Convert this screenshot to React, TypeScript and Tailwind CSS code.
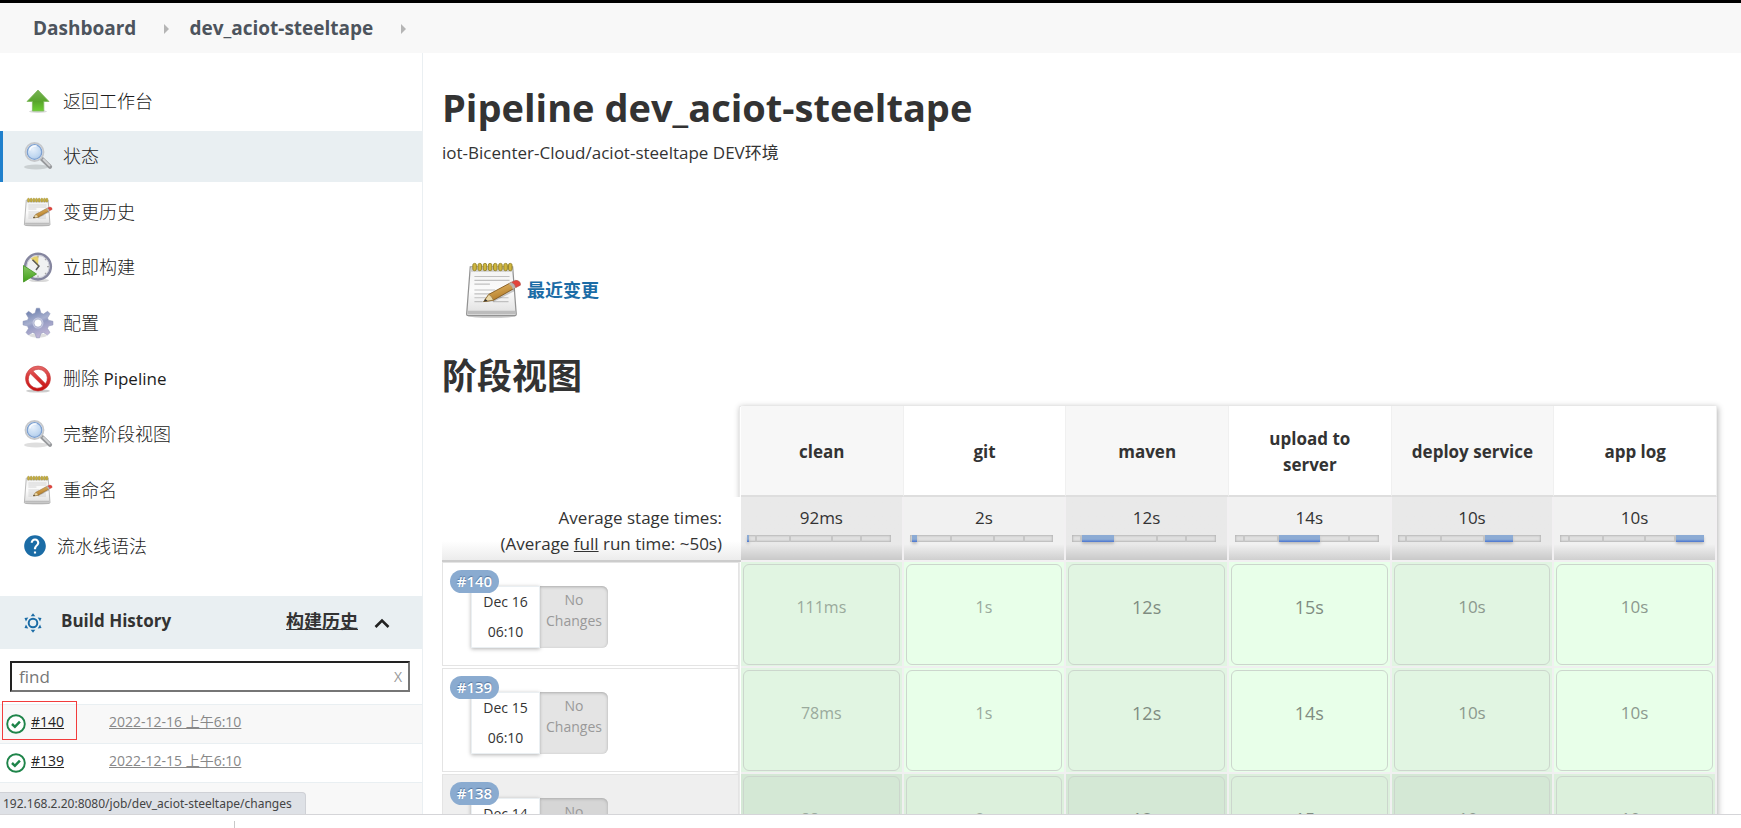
import React from "react";

type IconProps = { className?: string };

function UpIcon() {
  return (
    <svg viewBox="0 0 32 32" className="h-8 w-8" aria-hidden="true">
      <defs>
        <linearGradient id="upFill" x1="0" y1="0" x2="0" y2="1">
          <stop offset="0" stopColor="#79b356" />
          <stop offset="0.55" stopColor="#58a52b" />
          <stop offset="1" stopColor="#6dd032" />
        </linearGradient>
      </defs>
      <ellipse cx="16" cy="26.5" rx="9" ry="1.5" fill="#000" opacity="0.15" />
      <path d="M16 5 L27 16.5 H21.8 V26 H10.4 V16.5 H5 Z" fill="url(#upFill)" stroke="#7fb95e" strokeWidth="0.8" strokeLinejoin="round" />
    </svg>
  );
}

function SearchIcon() {
  return (
    <svg viewBox="0 0 32 32" className="h-8 w-8" aria-hidden="true">
      <defs>
        <radialGradient id="lens" cx="0.4" cy="0.3" r="0.8">
          <stop offset="0" stopColor="#e6f0fb" />
          <stop offset="0.6" stopColor="#c4daf2" />
          <stop offset="1" stopColor="#a8c4e4" />
        </radialGradient>
      </defs>
      <ellipse cx="14" cy="27" rx="12" ry="2.4" fill="#000" opacity="0.13" />
      <path d="M19.5 18.5 L28 26.8" stroke="#96989b" strokeWidth="4.2" strokeLinecap="round" />
      <path d="M21.5 19.5 L27.6 25.6" stroke="#d2d3d5" strokeWidth="1.8" strokeLinecap="round" />
      <circle cx="12.5" cy="12" r="9" fill="#fff" stroke="#c6c8cb" strokeWidth="1.8" />
      <circle cx="12.5" cy="12" r="7.3" fill="url(#lens)" stroke="#7b9fd0" strokeWidth="1.3" />
      <path d="M7.6 10.5a5.6 5.6 0 0 1 7-4.4" stroke="#fff" strokeWidth="1.6" fill="none" opacity="0.8" />
    </svg>
  );
}

function NotepadIcon({ className = "h-[30px] w-8" }: IconProps) {
  return (
    <svg viewBox="0 0 60 60" preserveAspectRatio="none" className={className} aria-hidden="true">
      <defs>
        <linearGradient id="paper" x1="0" y1="0" x2="0" y2="1">
          <stop offset="0" stopColor="#f2f2f2" />
          <stop offset="0.5" stopColor="#fbfbfb" />
          <stop offset="1" stopColor="#dedede" />
        </linearGradient>
        <linearGradient id="pencil" x1="0" y1="0" x2="0.5" y2="1">
          <stop offset="0" stopColor="#f0c878" />
          <stop offset="1" stopColor="#ad7420" />
        </linearGradient>
      </defs>
      <ellipse cx="29" cy="57" rx="23" ry="2" fill="#000" opacity="0.18" />
      <path d="M8 6 H49 L52.5 55 Q52.5 56.5 51 56.5 H6 Q4.5 56.5 4.5 55 Z" fill="url(#paper)" stroke="#929292" strokeWidth="1.2" />
      <path d="M8.5 6.5 H48.5 L49 11 H8 Z" fill="#cdcdcd" />
      <path d="M5.8 51.5 H51.3 V55 H5.8 Z" fill="#bcbcbc" />
      <g fill="#d0b63e" stroke="#948225" strokeWidth="0.9">
        <rect x="10.5" y="2.5" width="3.4" height="7.5" rx="1.6" />
        <rect x="15.5" y="2.5" width="3.4" height="7.5" rx="1.6" />
        <rect x="20.5" y="2.5" width="3.4" height="7.5" rx="1.6" />
        <rect x="25.5" y="2.5" width="3.4" height="7.5" rx="1.6" />
        <rect x="30.5" y="2.5" width="3.4" height="7.5" rx="1.6" />
        <rect x="35.5" y="2.5" width="3.4" height="7.5" rx="1.6" />
        <rect x="40.5" y="2.5" width="3.4" height="7.5" rx="1.6" />
        <rect x="45" y="2.5" width="3.4" height="7.5" rx="1.6" />
      </g>
      <path d="M12 16H46M12 20H46M12 24H27M12 30H32M12 34H30M12 38H24M12 42H20M36 38H45M30 42H45" stroke="#c0c0c0" strokeWidth="1.2" />
      <path d="M22 42 L31 42 L51 31 L50 27 Z" fill="#000" opacity="0.2" />
      <path d="M21 42 L26 34.5 L47 22.5 Q51 24 51 28 L30.5 40.5 Z" fill="url(#pencil)" stroke="#825a22" strokeWidth="0.9" strokeLinejoin="round" />
      <path d="M21 42 L26 34.5 Q29 36.5 30.5 40.5 Z" fill="#ecd9a8" stroke="#8a6a35" strokeWidth="0.7" />
      <path d="M21 42 L22.7 39.4 L24.8 41.4 Z" fill="#333" />
      <path d="M45 23.7 L48.5 21.6 Q53 23.5 52.5 27.2 L49 29.3 Q49 25.5 45 23.7Z" fill="#b9b3b0" />
      <path d="M48 21.9 L52 20 Q57 20.5 56.5 25 L52 27.5 Q52 24 48 21.9Z" fill="#e5433b" stroke="#b34a43" strokeWidth="0.7" />
    </svg>
  );
}

function ClockIcon() {
  return (
    <svg viewBox="0 0 32 32" className="h-8 w-8" aria-hidden="true">
      <defs>
        <linearGradient id="play" x1="0" y1="0" x2="0" y2="1">
          <stop offset="0" stopColor="#8ac667" />
          <stop offset="1" stopColor="#3fa117" />
        </linearGradient>
      </defs>
      <ellipse cx="17" cy="29.5" rx="10" ry="1.6" fill="#000" opacity="0.15" />
      <circle cx="16" cy="15.6" r="12.8" fill="#f0f1f2" stroke="#85869f" strokeWidth="2.6" />
      <circle cx="16" cy="15.6" r="11.2" fill="none" stroke="#c3c4d2" strokeWidth="0.8" />
      <path d="M16 15.6 L8.8 7.6 Q12 4.8 16.5 5 Z" fill="#e7d26b" />
      <path d="M10.5 8.8 L17 15 L14 19" stroke="#5a5a5a" strokeWidth="1.5" fill="none" />
      <path d="M16 4.5v2M27 15.6h-2M24 8l-1 1M24 23l-1-1M16 26.5v-2" stroke="#a8a8a8" strokeWidth="1.2" />
      <path d="M1.5 14.5 L14.5 23 L1.5 31 Z" fill="url(#play)" stroke="#4d9a2d" strokeWidth="0.9" strokeLinejoin="round" />
    </svg>
  );
}

function GearIcon() {
  return (
    <svg viewBox="0 0 32 32" className="h-8 w-8" aria-hidden="true">
      <defs>
        <linearGradient id="gear" x1="0.2" y1="0" x2="0.6" y2="1">
          <stop offset="0" stopColor="#6478a8" />
          <stop offset="0.45" stopColor="#a8b0cf" />
          <stop offset="0.55" stopColor="#949bc2" />
          <stop offset="1" stopColor="#c4b8d8" />
        </linearGradient>
      </defs>
      <ellipse cx="16" cy="28.5" rx="9" ry="2" fill="#000" opacity="0.13" />
      <path
        fill="url(#gear)"
        fillRule="evenodd"
        d="M14.4 1.2h3.2l1.4 4.9 2.5 1 4.1-2.9 2.5 2.5-2.6 4.3 1 2.2 4.5 1.1v3.6l-4.5 1.2-1 2.4 2.5 4.1-2.5 2.4-4.1-2.5-2.5.9-1.4 4.5h-3.1l-1.4-4.5-2.4-.9-4.2 2.5-2.4-2.4 2.5-4.1-1-2.4L1 17.9v-3.6l4.5-1.1 1-2.2-2.5-4.3 2.5-2.5 4.1 2.9 2.4-1zM16 12.100a4 4 0 1 0 0 8 4 4 0 0 0 0-8z"
        stroke="#8d95b6"
        strokeWidth="0.5"
      />
      <circle cx="16" cy="16.1" r="4.9" fill="none" stroke="#c5c9e0" strokeWidth="1.2" />
    </svg>
  );
}

function ForbiddenIcon() {
  return (
    <svg viewBox="0 0 32 32" className="h-8 w-8" aria-hidden="true">
      <defs>
        <linearGradient id="stop" x1="0" y1="0" x2="0" y2="1">
          <stop offset="0" stopColor="#e56a6a" />
          <stop offset="0.5" stopColor="#d83333" />
          <stop offset="1" stopColor="#c40d0d" />
        </linearGradient>
      </defs>
      <ellipse cx="16" cy="28" rx="12" ry="1.6" fill="#000" opacity="0.2" />
      <circle cx="16" cy="15.5" r="10" fill="#fff" />
      <path
        fillRule="evenodd"
        fill="url(#stop)"
        stroke="#c43a3a"
        strokeWidth="0.6"
        d="M16 3a12.5 12.5 0 1 0 0 25 12.5 12.5 0 0 0 0-25zM10.9 8.1L23.5 20.7A9 9 0 0 0 10.9 8.1zM8.3 10.6A9 9 0 0 0 21 23.2z"
      />
    </svg>
  );
}

function HelpIcon() {
  return (
    <svg viewBox="0 0 24 24" className="h-[26px] w-[26px]" aria-hidden="true">
      <path
        fill="#1b6ca6"
        d="M12 2C6.48 2 2 6.48 2 12s4.48 10 10 10 10-4.48 10-10S17.52 2 12 2zm1 17h-2v-2h2v2zm2.07-7.75l-.9.92C13.45 12.9 13 13.5 13 15h-2v-.5c0-1.1.45-2.1 1.17-2.83l1.24-1.26c.37-.36.59-.86.59-1.41 0-1.1-.9-2-2-2s-2 .9-2 2H8c0-2.21 1.79-4 4-4s4 1.79 4 4c0 .88-.36 1.68-.93 2.25z"
      />
    </svg>
  );
}

function SunIcon() {
  return (
    <svg viewBox="0 0 20 20" className="h-5 w-5" aria-hidden="true">
      <circle cx="10" cy="10" r="4.3" fill="none" stroke="#1b6ca6" strokeWidth="2" />
      <g fill="#1b6ca6">
        {[0, 60, 120, 180, 240, 300].map((a) => (
          <path key={a} d="M10 0.2L12.3 3.2H7.7Z" transform={`rotate(${a} 10 10)`} />
        ))}
      </g>
    </svg>
  );
}

function SuccessIcon() {
  return (
    <svg viewBox="0 0 20 20" className="h-5 w-5 shrink-0" aria-hidden="true">
      <circle cx="10" cy="10" r="8.8" fill="#fff" stroke="#1e8449" strokeWidth="1.9" />
      <path d="M6 10l2.9 2.8 5-5.2" fill="none" stroke="#1e8449" strokeWidth="2.5" />
    </svg>
  );
}

function Crumb() {
  return (
    <svg viewBox="0 0 5 10" className="h-2.5 w-[5px]" aria-hidden="true">
      <path d="M0 0L5 5L0 10Z" fill="#b5b5b5" />
    </svg>
  );
}

const tasks = [
  { label: "返回工作台", icon: <UpIcon /> },
  { label: "状态", icon: <SearchIcon />, active: true },
  { label: "变更历史", icon: <NotepadIcon /> },
  { label: "立即构建", icon: <ClockIcon /> },
  { label: "配置", icon: <GearIcon /> },
  { label: "删除", suffix: "Pipeline", icon: <ForbiddenIcon /> },
  { label: "完整阶段视图", icon: <SearchIcon /> },
  { label: "重命名", icon: <NotepadIcon /> },
  { label: "流水线语法", icon: <HelpIcon /> },
];

const stages = [
  { name: "clean", avg: "92ms" },
  { name: "git", avg: "2s" },
  { name: "maven", avg: "12s" },
  { name: "upload to server", avg: "14s" },
  { name: "deploy service", avg: "10s" },
  { name: "app log", avg: "10s" },
];

const segments = [2, 6, 34, 43, 29, 30];

const runs = [
  { id: "#140", date: "Dec 16", time: "06:10", cells: ["111ms", "1s", "12s", "15s", "10s", "10s"] },
  { id: "#139", date: "Dec 15", time: "06:10", cells: ["78ms", "1s", "12s", "14s", "10s", "10s"] },
  { id: "#138", date: "Dec 14", time: "06:10", cells: ["88ms", "2s", "12s", "15s", "10s", "10s"], old: true },
];

const builds = [
  { id: "#140", when: "2022-12-16 上午6:10", shade: true, marked: true },
  { id: "#139", when: "2022-12-15 上午6:10", shade: false },
  { id: "#138", when: "2022-12-14 上午6:10", shade: true },
];

const tone = [
  "text-[#9aaa9c] text-base",
  "text-[#9aaa9c] text-base",
  "text-[#7f8c81] text-lg",
  "text-[#7f8c81] text-lg",
  "text-[#8c998e] text-[17px]",
  "text-[#8c998e] text-[17px]",
];

function Sidebar() {
  return (
    <aside className="w-[423px] shrink-0 overflow-hidden border-r border-[#eaeff2]">
      <nav className="mt-[22px] flex h-[496px] flex-col justify-between">
        {tasks.map((t) => (
          <a
            key={t.label}
            href="#"
            className={`flex h-[51px] items-center gap-[9px] border-l-[3px] pl-[19px] text-lg font-light text-[#1c1c1c] ${
              t.active ? "border-[#2080cc] bg-[#e9eff2]" : "border-transparent"
            }`}
          >
            {t.icon}
            <span>
              {t.label}
              {t.suffix && <span className="text-[17px] font-medium"> {t.suffix}</span>}
            </span>
          </a>
        ))}
      </nav>
      <section className="mt-[25px]">
        <header className="flex h-[53px] items-center bg-[#e9eff2] pr-8 pl-[23px]">
          <SunIcon />
          <h2 className="ml-[18px] pb-1 text-[17px] font-bold">Build History</h2>
          <a href="#" className="mr-4 ml-auto pb-1 text-lg font-bold underline">
            构建历史
          </a>
          <button type="button" aria-label="收起" className="flex h-5 w-4 items-center">
            <svg viewBox="0 0 16 10" className="h-2.5 w-4" aria-hidden="true">
              <path d="M1.5 9L8 2.5L14.5 9" fill="none" stroke="#222" strokeWidth="2.6" />
            </svg>
          </button>
        </header>
        <div className="my-3 mr-3 ml-2.5 flex h-[31px] items-center border-2 border-t-[#222] border-r-[#767676] border-b-[#767676] border-l-[#222] pr-1.5 pl-[7px]">
          <input aria-label="find" placeholder="find" className="min-w-0 flex-1 text-[17px] outline-none placeholder:text-[#777]" />
          <button type="button" aria-label="清除" className="text-sm text-[#999]">
            X
          </button>
        </div>
        <ul>
          {builds.map((b) => (
            <li key={b.id} className={`relative flex h-[39px] items-center border-t border-[#e9eff2] pl-1.5 text-sm ${b.shade ? "bg-[#f8f8f8]" : ""}`}>
              <SuccessIcon />
              <a href="#" className="ml-[5px] w-[78px] pb-1 text-[#222] underline">
                {b.id}
              </a>
              <a href="#" className="pb-1 text-[#888] underline">
                {b.when}
              </a>
              {b.marked && <span className="pointer-events-none absolute -top-1 left-0.5 h-[39px] w-[75px] border border-[#f23c3c]" />}
            </li>
          ))}
        </ul>
      </section>
    </aside>
  );
}

function StageBar({ index }: { index: number }) {
  return (
    <div className="mr-[11px] ml-1.5 flex h-[7px] bg-[#e0e0e0] shadow-[inset_0_0_2px_1px_#b8b8b8]">
      {segments.map((w, i) => (
        <div
          key={i}
          style={{ flexGrow: w }}
          className={`basis-0 ${
            i === index
              ? "bg-linear-to-b from-[#8cabd4] from-60% to-[#4a74cf] shadow-[0_2px_3px_#bbb]"
              : i > 0 && i < 5
                ? "border-r-2 border-[#c6c6c6]"
                : ""
          }`}
        />
      ))}
    </div>
  );
}

function StageTable() {
  return (
    <div className="relative">
      <div className="pointer-events-none absolute inset-y-0 right-0 left-[297px] border border-[#e9e9e9] shadow-[1px_1px_6px_rgba(0,0,0,0.3)]" />
      <table className="relative w-full table-fixed border-separate border-spacing-0">
        <colgroup>
          <col className="w-[299px]" />
          {stages.map((s) => (
            <col key={s.name} />
          ))}
        </colgroup>
        <thead>
          <tr className="h-[91px]">
            <td />
            {stages.map((s, i) => (
              <th
                key={s.name}
                scope="col"
                className={`border-r border-b-2 border-r-[#f0f0f0] border-b-[#dedede] pt-0.5 text-[17px] leading-[26px] font-bold ${
                  i % 2 === 0 ? "bg-[#f7f7f7]" : "bg-white px-8"
                }`}
              >
                {s.name}
              </th>
            ))}
          </tr>
          <tr className="h-[65px]">
            <td className="border-b-2 border-[#ccc] bg-linear-to-b from-white from-70% to-[#ececec] pr-[19px] text-right align-top text-[17px] leading-[26px]">
              <div className="pt-2">Average stage times:</div>
              <div>
                (Average <u>full</u> run time: ~50s)
              </div>
            </td>
            {stages.map((s, i) => (
              <td
                key={s.name}
                className={`border-r-2 border-b-2 border-[#f2f0f2] bg-linear-to-b from-75% pt-2 text-center align-top text-[17px] leading-[26px] ${
                  i % 2 === 0 ? "from-[#e9e9e9] to-[#c9c9c9]" : "from-[#f1f1f1] to-[#cfcfcf]"
                }`}
              >
                <div className="mb-1">{s.avg}</div>
                <StageBar index={i} />
              </td>
            ))}
          </tr>
        </thead>
        <tbody>
          {runs.map((r) => (
            <tr key={r.id} className="h-[106px]">
              <td className="pr-0.5 pb-0.5 align-top">
                <div className={`h-[104px] border border-[#e4e4e4] ${r.old ? "bg-[#efefef]" : "bg-white"}`}>
                  <div className="pt-[7px] pl-[7px]">
                    <span className="relative z-10 flex h-[23px] w-[49px] items-center justify-center rounded-full bg-[#8aabd0] text-[15px] font-semibold text-white text-shadow-[0_-1px_1px_#55749c]">
                      {r.id}
                    </span>
                  </div>
                  <div className="-mt-[7px] ml-7 flex h-[62px]">
                    <div className="w-[69px] border border-[#eaeff2] bg-white text-center text-sm leading-[30px] shadow-[0_1px_4px_rgba(0,0,0,0.3)]">
                      <div>{r.date}</div>
                      <div>{r.time}</div>
                    </div>
                    <div
                      className={`w-[68px] rounded-r-md pt-[3px] text-center text-sm leading-[21px] text-[#999] shadow-[inset_0_1px_3px_#aaa] ${
                        r.old ? "bg-[#d6d6d6]" : "bg-[#e4e4e4]"
                      }`}
                    >
                      No Changes
                    </div>
                  </div>
                </div>
              </td>
              {r.cells.map((c, i) => (
                <td
                  key={i}
                  className={`border-r-2 border-b-2 border-[#f0f0f0] px-0.5 pt-0.5 pb-px ${
                    r.old ? (i % 2 === 0 ? "bg-[#d4e8d5]" : "bg-[#dcf0dc]") : i % 2 === 0 ? "bg-[#e1f5e2]" : "bg-[#e8ffe9]"
                  }`}
                >
                  <div className={`flex h-[101px] items-center justify-center rounded-md border border-[#ccd6cd] pb-4 ${tone[i]}`}>{c}</div>
                </td>
              ))}
            </tr>
          ))}
        </tbody>
      </table>
    </div>
  );
}

export default function App() {
  return (
    <div className="flex h-screen flex-col overflow-hidden bg-white font-['Open_Sans','Noto_Sans_CJK_SC',sans-serif] text-[#333]">
      <header className="flex h-[53px] shrink-0 items-center border-t-[3px] border-black bg-[#f8f8f8] pt-px pl-[33px] text-[19px] font-bold text-[#4d545d]">
        <a href="#">Dashboard</a>
        <span className="mr-5 ml-7">
          <Crumb />
        </span>
        <a href="#">dev_aciot-steeltape</a>
        <span className="ml-7">
          <Crumb />
        </span>
      </header>
      <div className="relative flex min-h-0 flex-1 overflow-hidden">
        <Sidebar />
        <main className="min-w-0 flex-1 pr-6 pl-[19px]">
          <h1 className="mt-7 text-[38px] leading-[52px] font-bold">Pipeline dev_aciot-steeltape</h1>
          <p className="mt-2 text-[17px] leading-6">iot-Bicenter-Cloud/aciot-steeltape DEV环境</p>
          <a href="#" className="mt-[96px] ml-5 flex items-center gap-[3px] text-lg font-bold text-[#1b6ca6]">
            <NotepadIcon className="h-[58px] w-[62px]" />
            最近变更
          </a>
          <h2 className="mt-8 mb-[5px] text-[35px] leading-[50px] font-bold">阶段视图</h2>
          <StageTable />
        </main>
        <div className="absolute bottom-0 left-0 h-[22px] w-[306px] rounded-tr border-t border-r border-[#cfd1d6] bg-[#dee1e6] pl-[3px] font-['Noto_Sans',sans-serif] text-xs leading-[21px] whitespace-nowrap text-[#444]">
          192.168.2.20:8080/job/dev_aciot-steeltape/changes
        </div>
      </div>
      <footer className="flex h-3.5 shrink-0 items-end border-t border-[#d5d5d8] bg-white">
        <div className="ml-[234px] h-[7px] w-px bg-[#c8c8c8]" />
      </footer>
    </div>
  );
}
